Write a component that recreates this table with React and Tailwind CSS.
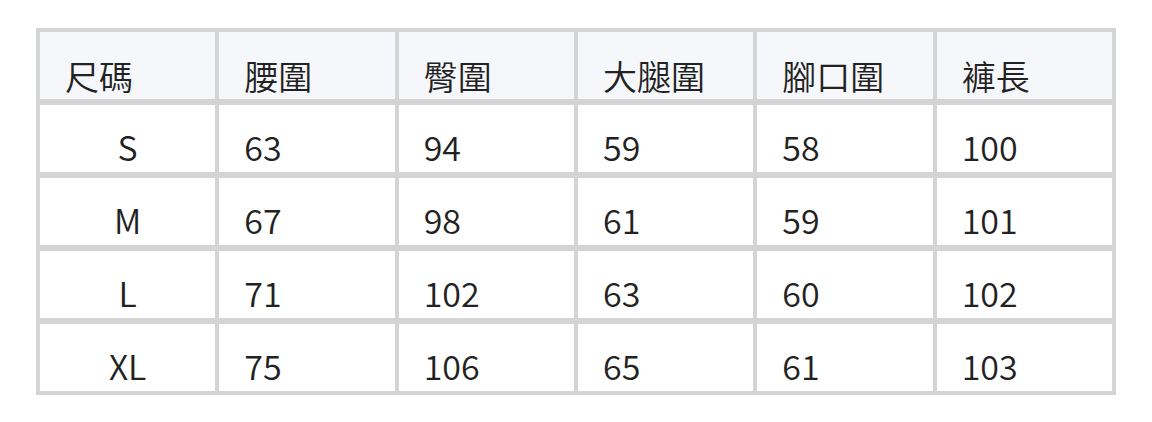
const header = ['尺碼', '腰圍', '臀圍', '大腿圍', '腳口圍', '褲長'];

const rows = [
  ['S', '63', '94', '59', '58', '100'],
  ['M', '67', '98', '61', '59', '101'],
  ['L', '71', '102', '63', '60', '102'],
  ['XL', '75', '106', '65', '61', '103'],
];

const font = { fontFamily: '"Noto Sans CJK TC", "Noto Sans", sans-serif' };

export default function App() {
  return (
    <div className="w-[1152px] h-[422px] bg-white pt-[28px] pl-[36px]" style={font}>
      <div className="w-[1080px] bg-[#d4d4d4] p-[4px] grid grid-cols-6 gap-x-[4px] gap-y-[6px]">
        {header.map((h) => (
          <div key={h} className="h-[67px] bg-[#f6f7fb] flex items-end pl-[25px] pb-[6px] text-[34px] leading-[34px] font-[350] text-[#222]">
            {h}
          </div>
        ))}
        {rows.map((row) =>
          row.map((cell, i) => (
            <div
              key={row[0] + i}
              className={
                'h-[67px] bg-white flex items-end pb-[8px] text-[34px] leading-[34px] font-[350] text-[#222] ' +
                (i === 0 ? 'justify-center' : 'pl-[25px]')
              }
            >
              {cell}
            </div>
          ))
        )}
      </div>
    </div>
  );
}
